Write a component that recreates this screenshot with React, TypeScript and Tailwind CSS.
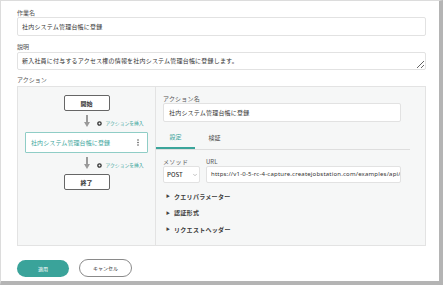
import { ChevronDown } from 'lucide-react';

const font = { fontFamily: '"Noto Sans CJK JP", "Noto Sans", sans-serif' };

const Arrow = () => (
  <svg width="6" height="13" viewBox="0 0 6 13">
    <rect x="2" y="0" width="2" height="8" fill="#9a9a9a" />
    <polygon points="0,7 6,7 3,12" fill="#9a9a9a" />
  </svg>
);

const InsertRow = () => (
  <div className="grid grid-cols-[1fr_auto_1fr] items-center h-[21px]">
    <div />
    <Arrow />
    <div className="flex items-center gap-[4px] pl-[7px] pt-[3px]">
      <svg width="5" height="5" viewBox="0 0 10 10">
        <circle cx="5" cy="5" r="3.3" fill="none" stroke="#333" strokeWidth="2.6" />
      </svg>
      <span className="text-[4.8px] text-[#3ba59b] whitespace-nowrap">アクションを挿入</span>
    </div>
  </div>
);

const Collapse = ({ label }: { label: string }) => (
  <div className="flex items-center h-[16.5px] pl-[2px] gap-[4px]">
    <span className="text-[4px] text-[#444]">▶</span>
    <span className="text-[6px] font-bold text-[#3c3c3c] tracking-[0.3px]">{label}</span>
  </div>
);

export default function App() {
  return (
    <div style={font} className="w-[443px] h-[285px] bg-white">
      <div className="w-[443px] h-[285px] border-l border-t border-[#dcdcdc] border-r-4 border-b-4 border-r-[#b4b4b4] border-b-[#b4b4b4] pl-[16px] pt-[8px] flex flex-col">
        {/* 作業名 */}
        <div className="text-[6px] leading-[8px] text-[#555]">作業名</div>
        <div className="w-[409px] h-[19px] border border-[#e2e2e2] rounded-[2px] bg-white flex items-center px-[4px] text-[6px] text-[#333] tracking-[0.2px]">
          社内システム管理台帳に登録
        </div>

        {/* 説明 */}
        <div className="text-[6px] leading-[8px] text-[#555] mt-[7px]">説明</div>
        <textarea
          readOnly
          value="新入社員に付与するアクセス権の情報を社内システム管理台帳に登録します。"
          className="w-[409px] h-[18px] mt-px border border-[#e2e2e2] rounded-[2px] bg-white px-[4px] py-[4px] text-[6px] leading-[8px] text-[#333] tracking-[0.2px] overflow-hidden outline-none"
        />

        {/* アクション */}
        <div className="text-[6px] leading-[8px] text-[#555] mt-[6px]">アクション</div>
        <div className="w-[409px] h-[160px] mt-[2px] border border-[#e3e3e3] bg-[#f6f7f7] flex">
          {/* flow */}
          <div className="w-[137px] flex flex-col items-stretch pt-[8px]">
            <div className="self-center w-[46px] h-[16px] border border-[#666] rounded-[2px] bg-white flex items-center justify-center text-[6px] font-bold text-[#333]">
              開始
            </div>
            <InsertRow />
            <div className="self-center w-[123px] h-[21px] border border-[#8fcdc6] rounded-[1px] bg-white flex items-center justify-between pl-[5px] pr-[8px]">
              <span className="text-[6px] text-[#3ba59b] tracking-[0.1px]">社内システム管理台帳に登録</span>
              <svg width="2" height="7" viewBox="0 0 2 7">
                <circle cx="1" cy="1" r="0.8" fill="#555" />
                <circle cx="1" cy="3.5" r="0.8" fill="#555" />
                <circle cx="1" cy="6" r="0.8" fill="#555" />
              </svg>
            </div>
            <InsertRow />
            <div className="self-center w-[46px] h-[16px] border border-[#666] rounded-[2px] bg-white flex items-center justify-center text-[6px] font-bold text-[#333]">
              終了
            </div>
          </div>

          {/* detail */}
          <div className="flex-1 border-l border-[#e3e3e3] flex flex-col pt-[8px]">
            <div className="pl-[7px]">
              <div className="text-[6px] leading-[8px] text-[#555] tracking-[0.2px]">アクション名</div>
              <div className="w-[238px] h-[19px] border border-[#e2e2e2] rounded-[2px] bg-white flex items-center px-[5px] text-[6px] text-[#333] tracking-[0.2px]">
                社内システム管理台帳に登録
              </div>
            </div>

            <div className="w-[254px] flex border-b border-[#dedede] mt-[4px]">
              <div className="w-[39px] h-[23px] flex items-center justify-center text-[6px] text-[#3ba59b] border-b-2 border-[#3ba59b] -mb-px">
                設定
              </div>
              <div className="w-[39px] h-[23px] flex items-center justify-center text-[6px] text-[#444]">
                検証
              </div>
            </div>

            <div className="pl-[7px] flex gap-[6px] mt-[8px]">
              <div className="flex flex-col">
                <div className="text-[6px] leading-[8px] text-[#555] tracking-[0.3px]">メソッド</div>
                <div className="w-[37px] h-[17px] border border-[#e2e2e2] rounded-[2px] bg-white flex items-center justify-between pl-[3px] pr-[1px]">
                  <span className="text-[6px] font-medium text-[#333]">POST</span>
                  <ChevronDown size={6} color="#888" strokeWidth={2} />
                </div>
              </div>
              <div className="flex flex-col">
                <div className="text-[6px] leading-[8px] text-[#555]">URL</div>
                <div className="w-[195px] h-[17px] border border-[#e2e2e2] rounded-[2px] bg-white flex items-center pl-[4px] overflow-hidden">
                  <span className="text-[6px] tracking-[0.2px] text-[#333] whitespace-nowrap" style={{ fontFamily: '"Noto Sans", sans-serif' }}>
                    https://v1-0-5-rc-4-capture.createjobstation.com/examples/api/
                  </span>
                </div>
              </div>
            </div>

            <div className="pl-[8px] mt-[5px] flex flex-col">
              <Collapse label="クエリパラメーター" />
              <Collapse label="認証形式" />
              <Collapse label="リクエストヘッダー" />
            </div>
          </div>
        </div>

        {/* buttons */}
        <div className="flex gap-[10px] mt-[14px]">
          <div className="w-[52px] h-[17px] rounded-full bg-[#3aa39a] flex items-center justify-center text-[5px] text-white">
            適用
          </div>
          <div className="w-[53px] h-[18px] -mt-px rounded-full border border-[#8a8a8a] bg-white flex items-center justify-center text-[5px] text-[#333]">
            キャンセル
          </div>
        </div>
      </div>
    </div>
  );
}
